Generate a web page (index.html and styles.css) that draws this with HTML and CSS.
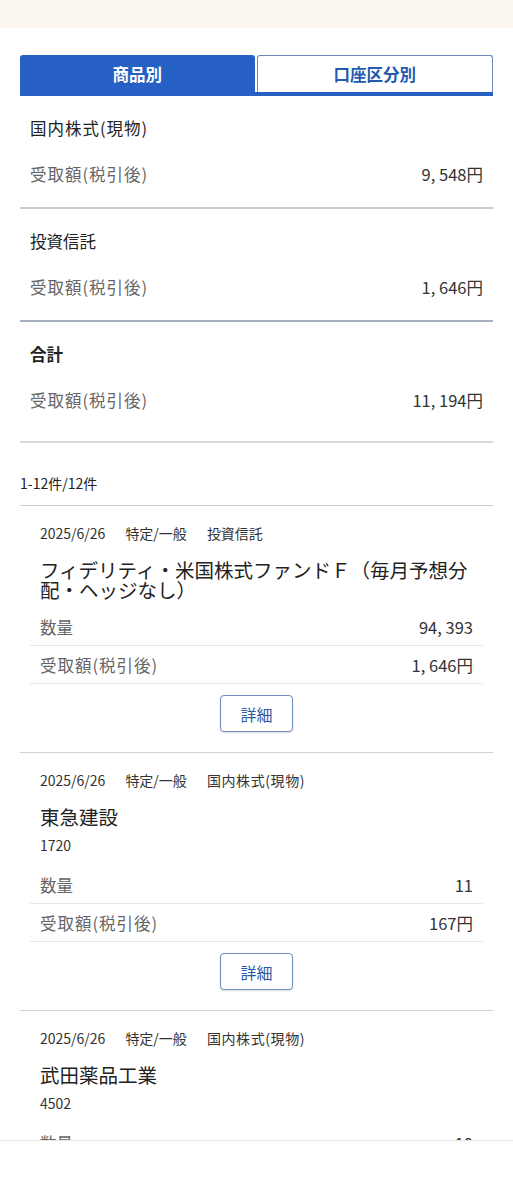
FILE: index.html
```html
<!DOCTYPE html>
<html lang="ja">
<head>
<meta charset="utf-8">
<link rel="stylesheet" href="styles.css">
</head>
<body>
<div class="topband"></div>
<main class="page">
  <div class="tabs">
    <div class="tab tab-active">商品別</div>
    <div class="tab tab-idle">口座区分別</div>
  </div>

  <section class="summary">
    <div class="summary-title fw">国内株式(現物)</div>
    <div class="summary-row"><span class="label fw">受取額(税引後)</span><span class="value">9, 548円</span></div>
  </section>
  <section class="summary summary-mid">
    <div class="summary-title">投資信託</div>
    <div class="summary-row"><span class="label fw">受取額(税引後)</span><span class="value">1, 646円</span></div>
  </section>
  <section class="summary summary-total">
    <div class="summary-title bold">合計</div>
    <div class="summary-row"><span class="label fw">受取額(税引後)</span><span class="value">11, 194円</span></div>
  </section>

  <div class="count">1-12件/12件</div>

  <article class="card">
    <div class="meta"><span>2025/6/26</span><span>特定/一般</span><span>投資信託</span></div>
    <div class="name">フィデリティ・米国株式ファンドＦ（毎月予想分配・ヘッジなし）</div>
    <div class="row"><span class="label">数量</span><span class="value">94, 393</span></div>
    <div class="row"><span class="label fw">受取額(税引後)</span><span class="value">1, 646円</span></div>
    <div class="btn-wrap"><button class="btn">詳細</button></div>
  </article>

  <article class="card">
    <div class="meta"><span>2025/6/26</span><span>特定/一般</span><span class="fw-s">国内株式(現物)</span></div>
    <div class="name">東急建設</div>
    <div class="code">1720</div>
    <div class="row"><span class="label">数量</span><span class="value">11</span></div>
    <div class="row"><span class="label fw">受取額(税引後)</span><span class="value">167円</span></div>
    <div class="btn-wrap"><button class="btn">詳細</button></div>
  </article>

  <article class="card">
    <div class="meta"><span>2025/6/26</span><span>特定/一般</span><span class="fw-s">国内株式(現物)</span></div>
    <div class="name">武田薬品工業</div>
    <div class="code">4502</div>
    <div class="row"><span class="label">数量</span><span class="value">10</span></div>
    <div class="row"><span class="label fw">受取額(税引後)</span><span class="value">1, 000円</span></div>
    <div class="btn-wrap"><button class="btn">詳細</button></div>
  </article>
</main>
<div class="bottombar"></div>
</body>
</html>
```
FILE: styles.css
```css
* { box-sizing: border-box; }
html, body { margin: 0; padding: 0; background: #fff; }
body {
  font-family: "Noto Sans CJK JP", "Noto Sans", sans-serif;
  color: #222;
  width: 513px;
  overflow-x: hidden;
}
.topband { height: 28px; background: #fcf7ee; }
.page { padding: 27px 20px 0; }

.fw { letter-spacing: 1px; }
.fw-s { letter-spacing: 0.6px; }

.tabs {
  display: flex;
  gap: 2px;
  border-bottom: 4px solid #2660c4;
}
.tab {
  flex: 1;
  height: 37px;
  display: flex;
  align-items: center;
  justify-content: center;
  font-size: 16.5px;
  font-weight: 700;
  border-radius: 3px 3px 0 0;
}
.tab-active { background: #2660c4; color: #fff; }
.tab-idle {
  background: #fff;
  color: #2559ad;
  border: 1px solid #6b86b8;
  border-bottom: none;
}

.summary {
  padding: 20px 10px 21px;
  border-bottom: 2px solid #c9cdd3;
}
.summary-mid { border-bottom-color: #a9b1c1; }
.summary-total { padding-bottom: 29px; border-bottom: 2px solid #d6d9de; }
.summary-title { font-size: 16.5px; line-height: 24px; color: #222; }
.bold { font-weight: 700; }
.summary-row {
  margin-top: 22px;
  display: flex;
  justify-content: space-between;
  line-height: 24px;
}
.label { font-size: 16.5px; color: #666; }
.value { font-size: 16.5px; color: #333; }

.count {
  margin-top: 30px;
  font-size: 14px;
  line-height: 20px;
  padding-bottom: 12px;
  border-bottom: 1px solid #c9ced8;
  color: #222;
}

.card {
  padding: 17px 10px 20px;
  border-bottom: 1px solid #cdd1d8;
}
.meta {
  display: flex;
  gap: 20px;
  padding: 0 10px;
  font-size: 14px;
  line-height: 20px;
  color: #333;
}
.name {
  margin-top: 17px;
  margin-bottom: 8px;
  padding: 0 10px;
  font-size: 19.5px;
  line-height: 20px;
  color: #222;
}
.code {
  margin: 4px 0 11px;
  padding: 0 10px;
  font-size: 14px;
  line-height: 20px;
  color: #333;
}
.row {
  display: flex;
  justify-content: space-between;
  padding: 8px 10px 6px;
  line-height: 23px;
  border-bottom: 1px solid #e6e8eb;
}
.btn-wrap {
  display: flex;
  justify-content: center;
  margin-top: 11px;
}
.btn {
  width: 73px;
  height: 37px;
  background: #fff;
  border: 1px solid #6f8fc2;
  border-radius: 4px;
  box-shadow: 0 1px 2px rgba(0, 0, 0, 0.15);
  color: #2c5aa2;
  font-family: "Noto Sans CJK JP", sans-serif;
  font-size: 16px;
  padding: 0;
}

.bottombar {
  position: fixed;
  left: 0;
  right: 0;
  bottom: 0;
  height: 59px;
  background: #fff;
  border-top: 1px solid #e6e6e6;
}
```
